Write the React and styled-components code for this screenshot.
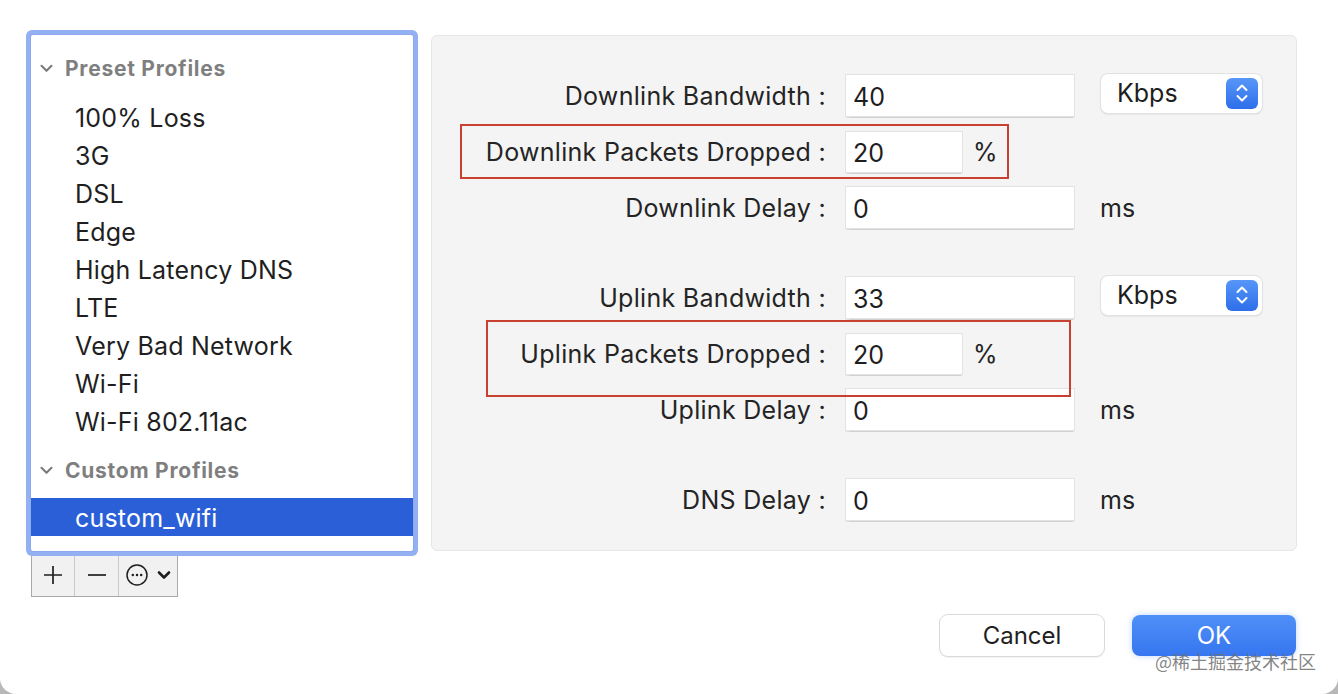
import React from 'react'
import styled, { createGlobalStyle } from 'styled-components'

const presets = [
  '100% Loss',
  '3G',
  'DSL',
  'Edge',
  'High Latency DNS',
  'LTE',
  'Very Bad Network',
  'Wi-Fi',
  'Wi-Fi 802.11ac',
]

const groups = [
  [
    { label: 'Downlink Bandwidth :', value: '40', unit: 'popup' },
    { label: 'Downlink Packets Dropped :', value: '20', unit: '%', narrow: true },
    { label: 'Downlink Delay :', value: '0', unit: 'ms' },
  ],
  [
    { label: 'Uplink Bandwidth :', value: '33', unit: 'popup' },
    { label: 'Uplink Packets Dropped :', value: '20', unit: '%', narrow: true },
    { label: 'Uplink Delay :', value: '0', unit: 'ms' },
  ],
  [
    { label: 'DNS Delay :', value: '0', unit: 'ms' },
  ],
]

function Chevron() {
  return (
    <svg width="13" height="9" viewBox="0 0 13 9">
      <path d="M1.5 1.8 L6.5 6.8 L11.5 1.8" fill="none" stroke="#7b7b7b" strokeWidth="2.1" strokeLinecap="round" strokeLinejoin="round" />
    </svg>
  )
}

function StepperArrows() {
  return (
    <svg width="14" height="22" viewBox="0 0 14 22">
      <path d="M2.5 8 L7 3.5 L11.5 8" fill="none" stroke="#fff" strokeWidth="2" strokeLinecap="round" strokeLinejoin="round" />
      <path d="M2.5 14 L7 18.5 L11.5 14" fill="none" stroke="#fff" strokeWidth="2" strokeLinecap="round" strokeLinejoin="round" />
    </svg>
  )
}

function KbpsPopup() {
  return (
    <Popup>
      <span>Kbps</span>
      <Stepper>
        <StepperArrows />
      </Stepper>
    </Popup>
  )
}

function FormRow({ row }) {
  return (
    <Row>
      <Label>{row.label}</Label>
      <Field $narrow={row.narrow}>{row.value}</Field>
      {row.unit === 'popup' ? (
        <KbpsPopup />
      ) : (
        <Unit $gap={row.narrow ? 11 : 26}>{row.unit}</Unit>
      )}
    </Row>
  )
}

export default function App() {
  return (
    <>
      <GlobalStyle />
      <Window>
        <Main>
          <Sidebar>
            <ProfileList>
              <GroupHeader $mb={11}>
                <Chevron />
                <span>Preset Profiles</span>
              </GroupHeader>
              {presets.map((p) => (
                <Item key={p}>{p}</Item>
              ))}
              <GroupHeader $mt={11} $mb={9}>
                <Chevron />
                <span>Custom Profiles</span>
              </GroupHeader>
              <Item $selected>custom_wifi</Item>
            </ProfileList>

            <ToolBar>
              <ToolButton $w={42}>
                <svg width="22" height="22" viewBox="0 0 22 22">
                  <path d="M11 2 V20 M2 11 H20" stroke="#1f1f1f" strokeWidth="1.7" />
                </svg>
              </ToolButton>
              <ToolButton $w={43}>
                <svg width="22" height="22" viewBox="0 0 22 22">
                  <path d="M2 11 H20" stroke="#1f1f1f" strokeWidth="1.7" />
                </svg>
              </ToolButton>
              <ToolButton $w={58}>
                <svg width="46" height="24" viewBox="0 0 46 24" style={{ marginLeft: 2 }}>
                  <circle cx="11" cy="12" r="10" fill="none" stroke="#1f1f1f" strokeWidth="1.5" />
                  <circle cx="6.8" cy="12" r="1.25" fill="#1f1f1f" />
                  <circle cx="11" cy="12" r="1.25" fill="#1f1f1f" />
                  <circle cx="15.2" cy="12" r="1.25" fill="#1f1f1f" />
                  <path d="M33 9.5 L38 14.5 L43 9.5" fill="none" stroke="#1f1f1f" strokeWidth="2.6" strokeLinecap="round" strokeLinejoin="round" />
                </svg>
              </ToolButton>
            </ToolBar>
          </Sidebar>

          <Panel>
            {groups.map((g, i) => (
              <FieldGroup key={i}>
                {g.map((row) => (
                  <FormRow key={row.label} row={row} />
                ))}
              </FieldGroup>
            ))}
            <Annotation style={{ left: 28, top: 88, width: 549, height: 55 }} />
            <Annotation style={{ left: 54, top: 284, width: 585, height: 77 }} />
          </Panel>
        </Main>

        <Footer>
          <Button>Cancel</Button>
          <Button $primary>OK</Button>
        </Footer>

        <Watermark>@稀土掘金技术社区</Watermark>
      </Window>
    </>
  )
}

const GlobalStyle = createGlobalStyle`
  html, body {
    margin: 0;
    padding: 0;
    background: #b8b8b8;
  }
  body {
    font-family: Inter, "Liberation Sans", "Noto Sans", sans-serif;
    -webkit-font-smoothing: antialiased;
  }
  #root {
    width: 1338px;
    height: 694px;
  }
`

const Window = styled.div`
  position: relative;
  box-sizing: border-box;
  width: 1338px;
  height: 694px;
  padding: 35px 0 0 31px;
  background: #fff;
  border-radius: 0 0 16px 16px;
  color: #242424;
`

const Main = styled.div`
  display: flex;
  align-items: flex-start;
  gap: 18px;
`

const Sidebar = styled.div`
  display: flex;
  flex-direction: column;
  width: 382px;
`

const ProfileList = styled.div`
  position: relative;
  z-index: 1;
  box-sizing: border-box;
  height: 516px;
  padding-top: 14px;
  background: #fff;
  box-shadow: 0 0 0 1px #8ca8ee, 0 0 0 5px #93b0f3;
  border-radius: 2px;
`

const GroupHeader = styled.div`
  display: flex;
  align-items: center;
  gap: 12px;
  height: 38px;
  padding-left: 9px;
  margin-top: ${(p) => p.$mt || 0}px;
  margin-bottom: ${(p) => p.$mb || 0}px;
  font-size: 21px;
  font-weight: 700;
  color: #7f7f7f;
  letter-spacing: 0.75px;
`

const Item = styled.div`
  display: flex;
  align-items: center;
  height: 38px;
  padding-left: 44px;
  padding-top: 1px;
  box-sizing: border-box;
  font-size: 25px;
  letter-spacing: 0.2px;
  color: ${(p) => (p.$selected ? '#fff' : '#1f1f1f')};
  background: ${(p) => (p.$selected ? '#2a5fd8' : 'transparent')};
`

const ToolBar = styled.div`
  display: flex;
  width: fit-content;
  margin-top: 2px;
  border: 1px solid #a8a8a8;
  background: #f1f1f1;
`

const ToolButton = styled.div`
  display: flex;
  align-items: center;
  justify-content: center;
  width: ${(p) => p.$w}px;
  height: 42px;

  & + & {
    border-left: 1px solid #c9c9c9;
  }
`

const Panel = styled.div`
  position: relative;
  box-sizing: border-box;
  width: 866px;
  height: 516px;
  padding-top: 39px;
  display: flex;
  flex-direction: column;
  gap: 49px;
  background: #f4f4f4;
  border: 1px solid #e6e6e6;
  border-radius: 6px;
`

const FieldGroup = styled.div`
  display: flex;
  flex-direction: column;
  gap: 15px;
`

const Row = styled.div`
  display: flex;
  align-items: center;
  height: 41px;
`

const Label = styled.div`
  width: 394px;
  text-align: right;
  font-size: 25px;
  letter-spacing: 0.3px;
  color: #242424;
`

const Field = styled.div`
  box-sizing: border-box;
  display: flex;
  align-items: center;
  width: ${(p) => (p.$narrow ? 116 : 228)}px;
  height: ${(p) => (p.$narrow ? 40 : 41)}px;
  margin-left: 20px;
  padding: 2px 0 0 7px;
  background: #fff;
  box-shadow: 0 0 0 1px #e3e3e3, 0 1.5px 1px rgba(0, 0, 0, 0.14);
  font-size: 25px;
  color: #1e1e1e;
`

const Unit = styled.div`
  margin-left: ${(p) => p.$gap}px;
  font-size: 25px;
  color: #242424;
`

const Popup = styled.div`
  box-sizing: border-box;
  display: flex;
  align-items: center;
  justify-content: space-between;
  width: 161px;
  height: 39px;
  margin-left: 27px;
  margin-top: -5px;
  padding: 0 4px 0 16px;
  background: #fff;
  border-radius: 7px;
  box-shadow: 0 0 0 1px #e2e2e2, 0 1px 2px rgba(0, 0, 0, 0.18);
  font-size: 25px;
  color: #1e1e1e;
`

const Stepper = styled.div`
  display: flex;
  align-items: center;
  justify-content: center;
  width: 32px;
  height: 31px;
  border-radius: 6px;
  background: linear-gradient(#5797f9, #2e6ee9);
`

const Annotation = styled.div`
  position: absolute;
  box-sizing: border-box;
  border: 2px solid #c8402f;
  pointer-events: none;
`

const Footer = styled.div`
  display: flex;
  justify-content: flex-end;
  gap: 28px;
  margin-top: 18px;
  padding-right: 42px;
`

const Button = styled.div`
  box-sizing: border-box;
  display: flex;
  align-items: center;
  justify-content: center;
  width: 164px;
  height: 41px;
  border-radius: 8px;
  font-size: 24px;
  color: ${(p) => (p.$primary ? '#fff' : '#1f1f1f')};
  background: ${(p) => (p.$primary ? 'linear-gradient(#4f8ff8, #3676f0)' : '#fff')};
  box-shadow: ${(p) =>
    p.$primary
      ? '0 0 6px rgba(80, 140, 250, 0.35)'
      : '0 0 0 1px #dadada, 0 1px 2px rgba(0, 0, 0, 0.15)'};
`

const Watermark = styled.div`
  position: absolute;
  right: 22px;
  bottom: 20px;
  font-family: "Noto Sans CJK SC", sans-serif;
  font-size: 18px;
  color: rgba(110, 110, 110, 0.85);
  pointer-events: none;
`
